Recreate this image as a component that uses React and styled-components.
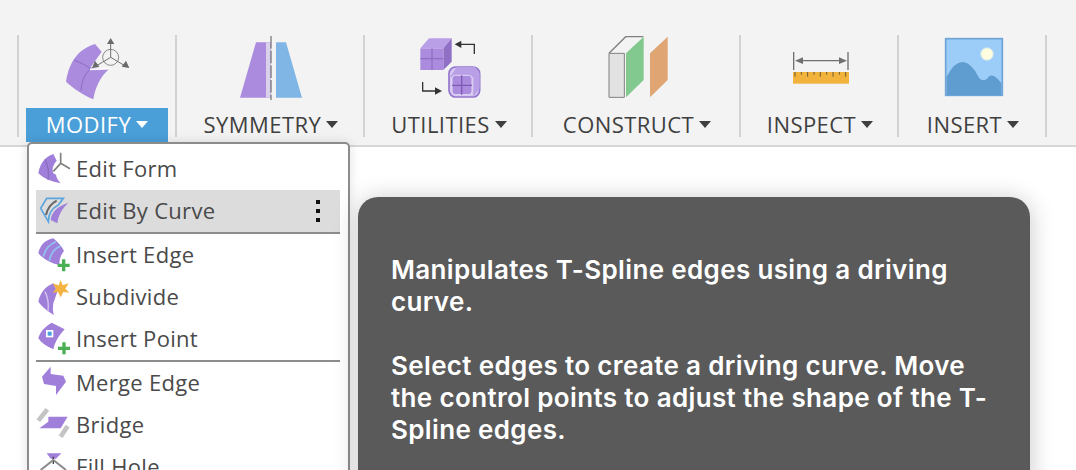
import React from "react";
import styled, { createGlobalStyle } from "styled-components";

const GlobalStyle = createGlobalStyle`
    html, body {
        margin: 0;
        padding: 0;
        background: #ffffff;
    }
    #root {
        height: 470px;
    }
`;

const Page = styled.div`
    position: relative;
    width: 1076px;
    height: 470px;
    overflow: hidden;
    background: #ffffff;
`;

const Toolbar = styled.div`
    display: flex;
    box-sizing: border-box;
    height: 147px;
    padding-left: 17px;
    background: #f3f3f3;
    border-bottom: 2px solid #d6d6d6;
`;

const Separator = styled.div`
    flex: 0 0 2px;
    margin: 35px 0 8px;
    background: #d2d2d2;
`;

const Group = styled.div`
    flex: 0 0 ${(p) => p.$width}px;
    display: flex;
    flex-direction: column;
    align-items: center;
    padding-top: 36px;
`;

const IconSlot = styled.div`
    height: 64px;
    margin-left: ${(p) => (p.$iconShift || 0) * 2}px;
`;

const IconBox = styled.svg`
    display: block;
    width: 64px;
    height: 64px;
`;

const GroupLabel = styled.div`
    display: flex;
    align-items: center;
    justify-content: center;
    box-sizing: border-box;
    width: 142px;
    height: 34px;
    margin-top: 8px;
    margin-left: ${(p) => p.$shift || 0}px;
    padding-bottom: 2px;
    gap: 5px;
    white-space: nowrap;
    font-family: "Open Sans", sans-serif;
    font-size: 22px;
    letter-spacing: 0.45px;
    color: ${(p) => (p.$active ? "#ffffff" : "#3f3f3f")};
    background: ${(p) => (p.$active ? "#4a9fd8" : "transparent")};
`;

const Caret = styled.span`
    width: 0;
    height: 0;
    border-left: 6px solid transparent;
    border-right: 6px solid transparent;
    border-top: 7px solid ${(p) => (p.$active ? "#ffffff" : "#3f3f3f")};
`;

const Menu = styled.div`
    position: absolute;
    left: 27px;
    top: 142px;
    width: 323px;
    height: 400px;
    box-sizing: border-box;
    padding: 4px 8px 0 7px;
    background: #ffffff;
    border: 2px solid #8c8c8c;
    border-radius: 5px;
    box-shadow: 0 0 12px rgba(0, 0, 0, 0.12);
`;

const MenuItem = styled.div`
    display: flex;
    align-items: center;
    height: 42px;
    padding-right: 20px;
    background: ${(p) => (p.$active ? "#dcdcdc" : "transparent")};
`;

const MenuIcon = styled.svg`
    display: block;
    flex: 0 0 40px;
    width: 40px;
    height: 42px;
`;

const MenuText = styled.span`
    flex: 1;
    padding-bottom: 2px;
    font-family: "Open Sans", sans-serif;
    font-size: 22px;
    letter-spacing: 0.3px;
    color: #4a4a4a;
`;

const MenuDivider = styled.div`
    height: 2px;
    background: #8c8c8c;
`;

const Kebab = styled.div`
    display: flex;
    flex-direction: column;
    gap: 5px;
`;

const KebabDot = styled.span`
    width: 4px;
    height: 4px;
    background: #111111;
`;

const Tooltip = styled.div`
    position: absolute;
    left: 358px;
    top: 197px;
    width: 672px;
    height: 330px;
    box-sizing: border-box;
    padding: 57px 33px 0;
    border-radius: 20px;
    background: #5a5a5a;
    box-shadow: 0 2px 24px rgba(0, 0, 0, 0.22);
    font-family: "Inter", sans-serif;
    font-weight: 600;
    font-size: 26px;
    letter-spacing: 0.35px;
    line-height: 32px;
    color: #ffffff;
`;

const TooltipPara = styled.p`
    margin: 0 0 32px;
`;

const purple = "#ab8bde";
const purpleDark = "#8a6cc0";
const menuPurple = "#a07fda";

const ModifyIcon = () => (
    <IconBox viewBox="195 48 192 192">
        <path d="M198 185C205 140 225 90 285 72L305 95L272 142L328 146C300 170 285 205 280 238C250 225 220 205 198 185Z" fill={purple} />
        <path d="M222 120C240 128 258 135 272 146C250 165 245 190 243 212" fill="none" stroke={purpleDark} strokeWidth="3" />
        <path d="M270 148L328 146" stroke="#ffffff" strokeWidth="5" />
        <circle cx="332" cy="112" r="24" fill="none" stroke="#8a8a8a" strokeWidth="3" />
        <path d="M332 62V112L288 138M332 112L376 138" fill="none" stroke="#707070" strokeWidth="3" />
        <path d="M332 54L343 72H321ZM276 144L285 122L298 140ZM388 144L365 140L378 122Z" fill="#6a6a6a" />
    </IconBox>
);

const SymmetryIcon = () => (
    <IconBox viewBox="717 48 192 192">
        <path d="M720 233L768 67H812V233Z" fill={purple} />
        <path d="M798 67H812V233H798Z" fill="#d9d0ea" />
        <path d="M828 67H858L906 233H828Z" fill="#7fb6e6" />
        <path d="M813 48V240" stroke="#555555" strokeWidth="3" strokeDasharray="38 6" />
    </IconBox>
);

const UtilitiesIcon = () => (
    <IconBox viewBox="174 48 192 192">
        <path d="M181 85L207 55H275L250 85Z" fill="#b9a0e6" />
        <path d="M250 85L275 55V125L250 150Z" fill="#8f70c5" />
        <path d="M181 85H250V150H181Z" fill={purple} />
        <path d="M216 85V150M181 116H250" stroke="#8f70c5" strokeWidth="4" />
        <path d="M343 102V73H300" fill="none" stroke="#333333" strokeWidth="4" />
        <path d="M284 73L304 62V84Z" fill="#333333" />
        <rect x="267" y="141" width="92" height="90" rx="20" fill="#d5c7ef" stroke="#9475cf" strokeWidth="5" />
        <path d="M290 141H345L359 160V205L340 231V172H270Z" fill="#b9a0e6" />
        <rect x="276" y="166" width="60" height="58" rx="10" fill={purple} stroke="#e3daf5" strokeWidth="3" />
        <path d="M305 166V224M276 196H336" stroke="#8058b8" strokeWidth="4" />
        <path d="M188 186V213H228" fill="none" stroke="#333333" strokeWidth="4" />
        <path d="M246 213L225 202V224Z" fill="#333333" />
    </IconBox>
);

const ConstructIcon = () => (
    <IconBox viewBox="738 48 192 192">
        <path d="M747 100L797 50H850" fill="none" stroke="#808080" strokeWidth="4" />
        <path d="M747 100H793V232H747Z" fill="#e2e2e2" stroke="#808080" strokeWidth="3" />
        <path d="M798 100L851 50V180L798 232Z" fill="#82c98f" />
        <path d="M870 100L923 50V180L870 232Z" fill="#dfa673" />
    </IconBox>
);

const InspectIcon = () => (
    <IconBox viewBox="204 48 192 192">
        <rect x="216" y="156" width="168" height="35" fill="#f2b33d" />
        <path d="M222 156V170M241 156V164M260 156V170M279 156V164M298 156V170M317 156V164M336 156V170M355 156V164M374 156V170" stroke="#6b5a30" strokeWidth="3" />
        <path d="M218 96V150M381 96V150" stroke="#707070" strokeWidth="4" />
        <path d="M230 122H370" stroke="#707070" strokeWidth="4" />
        <path d="M222 122L246 112V132ZM378 122L354 112V132Z" fill="#707070" />
    </IconBox>
);

const InsertIcon = () => (
    <IconBox viewBox="663 48 192 192">
        <rect x="674" y="56" width="170" height="170" fill="#9ccdf8" stroke="#6da3d6" strokeWidth="5" />
        <circle cx="798" cy="102" r="19" fill="#fffde0" stroke="#c8e2f2" strokeWidth="3" />
        <path d="M677 170Q700 125 726 126Q752 128 775 175Q790 190 805 168Q820 160 841 190V225H677Z" fill="#5f9ccf" />
    </IconBox>
);

const EditFormIcon = () => (
    <MenuIcon viewBox="48 24 120 126">
        <path d="M55 100C60 70 75 50 100 42L110 62C100 75 95 85 100 100L108 104C108 112 115 122 122 130C95 125 70 115 55 100Z" fill={menuPurple} />
        <path d="M75 58C85 80 88 100 84 120" fill="none" stroke={purpleDark} strokeWidth="4" />
        <path d="M122 38V70L100 94M122 70L150 86" fill="none" stroke="#808080" strokeWidth="5" />
    </MenuIcon>
);

const EditCurveIcon = () => (
    <MenuIcon viewBox="48 150 120 126">
        <path d="M80 175H130L115 195Q85 210 85 245L62 205Z" fill="none" stroke="#5aa5e0" strokeWidth="5" />
        <path d="M92 240Q95 205 145 188Q115 215 112 250Z" fill={menuPurple} />
        <path d="M78 225Q85 195 110 182" fill="none" stroke="#666666" strokeWidth="6" />
    </MenuIcon>
);

const PlusMark = ({ x, y }) => (
    <path d={`M${x - 5} ${y - 18}h10v13h13v10h-13v13h-10v-13h-13v-10h13Z`} fill="#4bb054" />
);

const InsertEdgeIcon = () => (
    <MenuIcon viewBox="48 282 120 126">
        <path d="M55 340C60 315 75 300 100 295C112 305 125 318 132 332C122 345 118 358 118 375C95 370 70 358 55 340Z" fill={menuPurple} />
        <path d="M70 350C75 328 90 312 108 305M88 362C92 340 105 325 122 318" fill="none" stroke="#8fc4ee" strokeWidth="5" />
        <PlusMark x={131} y={376} />
    </MenuIcon>
);

const SubdivideIcon = () => (
    <MenuIcon viewBox="48 408 120 126">
        <path d="M55 485C60 460 75 440 100 430L112 455L100 490C98 505 98 515 102 525C85 515 65 500 55 485Z" fill={menuPurple} />
        <path d="M75 455Q88 480 84 515" fill="none" stroke="#d5c5f0" strokeWidth="4" />
        <path d="M122 420L128 436L146 430L136 446L148 458L130 456L122 472L114 456L98 458L108 446L98 430L116 436Z" fill="#f4b340" />
    </MenuIcon>
);

const InsertPointIcon = () => (
    <MenuIcon viewBox="48 24 120 126">
        <path d="M55 85C60 65 75 50 95 38L134 58C118 75 105 95 100 118C80 110 65 100 55 85Z" fill={menuPurple} />
        <rect x="78" y="60" width="22" height="22" fill="#ffffff" />
        <rect x="83" y="65" width="12" height="12" fill="#4a9fe0" />
        <PlusMark x={132} y={115} />
    </MenuIcon>
);

const MergeEdgeIcon = () => (
    <MenuIcon viewBox="48 156 120 126">
        <path d="M92 170L66 200L72 222L108 228V255L138 215L130 197L92 192Z" fill={menuPurple} />
    </MenuIcon>
);

const BridgeIcon = () => (
    <MenuIcon viewBox="48 282 120 126">
        <path d="M55 332L82 298M122 380L143 348" stroke="#c4c4c4" strokeWidth="14" />
        <path d="M85 320H143L122 355H58L85 335Z" fill={menuPurple} />
    </MenuIcon>
);

const FillHoleIcon = () => (
    <MenuIcon viewBox="48 408 120 126">
        <path d="M80 430H124L108 446H92Z" fill={menuPurple} />
        <path d="M100 440V462" stroke="#444444" strokeWidth="4" />
        <path d="M62 480L100 450L138 480" fill="none" stroke="#8a8a8a" strokeWidth="6" />
    </MenuIcon>
);

const groups = [
    { label: "MODIFY", width: 156, icon: ModifyIcon, active: true },
    { label: "SYMMETRY", width: 186, icon: SymmetryIcon, shift: 2, iconShift: 1 },
    { label: "UTILITIES", width: 166, icon: UtilitiesIcon, shift: 2, iconShift: 2 },
    { label: "CONSTRUCT", width: 206, icon: ConstructIcon, shift: 2, iconShift: 2 },
    { label: "INSPECT", width: 156, icon: InspectIcon, shift: 2, iconShift: 2 },
    { label: "INSERT", width: 146, icon: InsertIcon, shift: 2, iconShift: 2 },
];

const menu_sections = [
    [
        { text: "Edit Form", icon: EditFormIcon },
        { text: "Edit By Curve", icon: EditCurveIcon, active: true },
    ],
    [
        { text: "Insert Edge", icon: InsertEdgeIcon },
        { text: "Subdivide", icon: SubdivideIcon },
        { text: "Insert Point", icon: InsertPointIcon },
    ],
    [
        { text: "Merge Edge", icon: MergeEdgeIcon },
        { text: "Bridge", icon: BridgeIcon },
        { text: "Fill Hole", icon: FillHoleIcon },
    ],
];

const App = () => {
    return (
        <Page>
            <GlobalStyle />
            <Toolbar>
                <Separator />
                {groups.map((group) => (
                    <React.Fragment key={group.label}>
                        <Group $width={group.width}>
                            <IconSlot $iconShift={group.iconShift}>
                                <group.icon />
                            </IconSlot>
                            <GroupLabel $active={group.active} $shift={group.shift}>
                                {group.label}
                                <Caret $active={group.active} />
                            </GroupLabel>
                        </Group>
                        <Separator />
                    </React.Fragment>
                ))}
            </Toolbar>
            <Menu>
                {menu_sections.map((section, index) => (
                    <React.Fragment key={index}>
                        {index > 0 && <MenuDivider />}
                        {section.map((item) => (
                            <MenuItem key={item.text} $active={item.active}>
                                <item.icon />
                                <MenuText>{item.text}</MenuText>
                                {item.active && (
                                    <Kebab>
                                        <KebabDot />
                                        <KebabDot />
                                        <KebabDot />
                                    </Kebab>
                                )}
                            </MenuItem>
                        ))}
                    </React.Fragment>
                ))}
            </Menu>
            <Tooltip>
                <TooltipPara>Manipulates T-Spline edges using a driving<br />curve.</TooltipPara>
                <TooltipPara>Select edges to create a driving curve. Move<br />the control points to adjust the shape of the T-<br />Spline edges.</TooltipPara>
            </Tooltip>
        </Page>
    );
};

export default App;
